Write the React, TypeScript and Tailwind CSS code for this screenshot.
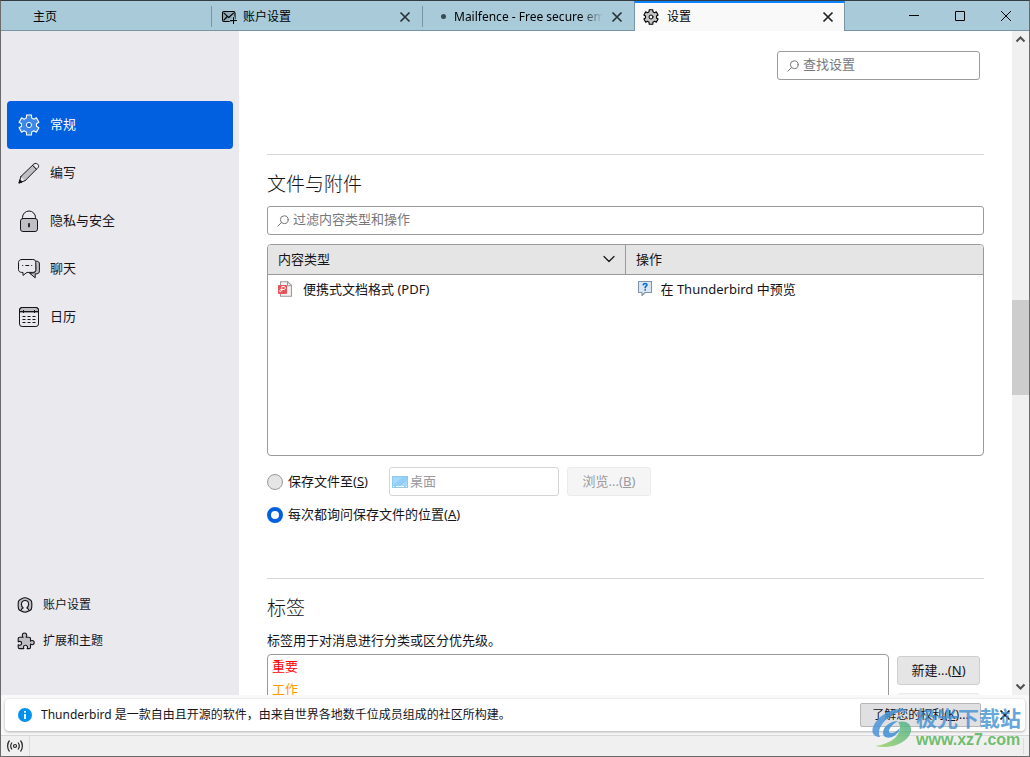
import type { ReactNode, SVGProps } from "react";

const FONT = "font-['Noto_Sans','Noto_Sans_CJK_SC',sans-serif]";

function gearPath(c: number, outer: number, inner: number) {
  const pts: string[] = [];
  for (let k = 0; k < 6; k++) {
    const mid = -90 + k * 60;
    const steps: [number, number][] = [
      [-20, inner],
      [-14, outer],
      [14, outer],
      [20, inner],
    ];
    for (const [da, r] of steps) {
      const a = ((mid + da) * Math.PI) / 180;
      pts.push(`${(c + r * Math.cos(a)).toFixed(2)} ${(c + r * Math.sin(a)).toFixed(2)}`);
    }
  }
  return `M${pts.join("L")}Z`;
}

function Icon({ size, children, ...rest }: { size: number; children: ReactNode } & SVGProps<SVGSVGElement>) {
  return (
    <svg
      width={size}
      height={size}
      viewBox={`0 0 ${size} ${size}`}
      fill="none"
      stroke="currentColor"
      strokeLinecap="round"
      strokeLinejoin="round"
      aria-hidden="true"
      className="shrink-0"
      {...rest}
    >
      {children}
    </svg>
  );
}

const GearLarge = () => (
  <Icon size={22} strokeWidth={1}>
    <path d={gearPath(11, 10.3, 7.6)} fill="currentColor" fillOpacity={0.25} strokeWidth={1.1} />
    <circle cx="11" cy="11" r="2.6" fill="#0060df" />
  </Icon>
);

const GearSmall = () => (
  <Icon size={16} strokeWidth={1}>
    <path d={gearPath(8, 7.4, 5.6)} fill="#c4c4c4" strokeWidth={1.1} />
    <circle cx="8" cy="8" r="2" fill="#f9f9fa" />
  </Icon>
);

const Pencil = () => (
  <Icon size={22} strokeWidth={1}>
    <path d="M3 14.4 14.8 3 18.7 7 7.2 18.6Z" fill="#c0bfc5" />
    <path d="M14.8 3c1.4-1.7 3.2-2.3 4.9-.8s1 3.4-1 4.8ZM3 14.4 1 20.8l6.2-2.2" fill="#eeeef2" />
    <path d="m1 20.8 1-3 2 2Z" fill="currentColor" />
  </Icon>
);

const Lock = () => (
  <Icon size={22} strokeWidth={1}>
    <path d="M4.500 8.500V7.500a6.500 6.500 0 0 1 13 0v1" />
    <rect x="2.500" y="8.500" width="17" height="13" rx="2.400" fill="#c0bfc5" />
    <path d="M11 13.800v2.600" strokeWidth={1.800} />
  </Icon>
);

const Chat = () => (
  <Icon size={22} strokeWidth={1}>
    <path d="M17.8 3.2h.8c1.8 0 2.8 1 2.8 2.8v6.8c0 1.8-.8 2.9-2.6 3h-1.6v4l-4.4-3.6-1.2-.8 4-.6c1.6-.2 2.2-1.2 2.2-2.6Z" fill="#c0bfc5" />
    <path d="M3.8 1.5h11c2 0 3 1.2 3 3v6.900c0 2-1 3-3 3H9l-4 3v-3H3.800c-2 0-3.300-1-3.300-3V4.500c0-1.800 1.300-3 3.300-3Z" fill="#eaeaee" />
    <path d="M4.600 7.500h.2M7.800 7.500h3M13.600 7.500h.2" />
  </Icon>
);

const CalendarIcon = () => (
  <Icon size={22} strokeWidth={1}>
    <path d="M1.500 5.500V4c0-1.600 1-2.500 2.600-2.500h13.800c1.600 0 2.600.9 2.600 2.500v1.500Z" fill="#c0bfc5" />
    <rect x="1.500" y="1.500" width="19" height="19" rx="2.600" />
    <path d="M1.500 5.500h19M5.500 4v3M16.500 4v3M4.500 10.500h3M9.500 10.500h3M14.500 10.500h3M4.500 13.500h3M9.500 13.500h3M14.500 13.500h3M4.500 16.500h3M9.500 16.500h3M14.500 16.500h3" strokeLinecap="butt" />
  </Icon>
);

const Account = () => (
  <Icon size={16} strokeWidth={1.1}>
    <path d="M8 .8c2 0 6 2 6.400 3.200.6 1.600.6 6.400 0 8C14 13.200 10 15.200 8 15.200S2 13.200 1.600 12C1 10.400 1 5.600 1.600 4 2 2.800 6 .8 8 .8Z" fill="#c0bfc5" />
    <path d="M4.200 13.200c.2-1.200.8-1.800 2-2.200C5 10 4.400 8.600 4.400 7.200c0-2.200 1.500-3.700 3.600-3.700s3.600 1.500 3.600 3.700c0 1.400-.6 2.800-1.800 3.800 1.200.4 1.800 1 2 2.200" fill="#eaeaee" />
  </Icon>
);

const Puzzle = () => (
  <Icon size={18} strokeWidth={1.1}>
    <path d="M6.200 5.200h-.3c-.3-.6-.6-1.200-.6-1.800 0-1.400.9-2.400 2.200-2.400s2.200 1 2.200 2.400c0 .6-.2 1.200-.6 1.800h3c.9 0 1.400.5 1.400 1.400v2.600c.6-.5 1.100-.7 1.700-.7 1.200 0 2 .9 2 2.100s-.8 2.100-2 2.100c-.6 0-1.100-.2-1.700-.7v3.200c0 .9-.5 1.400-1.400 1.400h-2c.3-.5.4-.9.400-1.400 0-1.200-.8-2-2-2s-2 .8-2 2c0 .5.100.9.400 1.400H2.600c-.9 0-1.400-.5-1.400-1.400v-2.400c.5.300.9.400 1.400.4 1.200 0 2-.8 2-1.900s-.8-1.900-2-1.900c-.5 0-.9.100-1.400.4V6.600c0-.9.500-1.400 1.400-1.400Z" fill="#c0bfc5" />
  </Icon>
);

const MailGear = () => (
  <Icon size={16} strokeWidth={1.1}>
    <rect x="1.500" y="2.500" width="12.500" height="10" rx="1.500" fill="#8eacb8" />
    <path d="m3 4.200 4.700 4.300 4.800-4.300M3 11l2.800-3" />
    <path d="M12.500 8.500v6M9.500 11.500h6" stroke="#a8cad9" strokeWidth={2.600} />
    <path d="M12.500 8.500v6M9.500 11.500h6" />
  </Icon>
);

const Close = () => (
  <svg width="12" height="12" viewBox="0 0 12 12" stroke="currentColor" strokeWidth="1.700" aria-hidden="true">
    <path d="m1.500 1.500 9 9M10.500 1.500l-9 9" />
  </svg>
);

const Search = () => (
  <Icon size={12} strokeWidth={1}>
    <circle cx="7.300" cy="4.700" r="3.900" />
    <path d="M4.500 7.500.8 11.200" />
  </Icon>
);

const PdfIcon = () => (
  <Icon size={16} strokeWidth={1.100}>
    <path d="M3.500.8h7.300l3.700 3.600v10.800h-11Z" stroke="#9a9a9f" fill="#f3f3f4" />
    <path d="M10.500 1v3.700h3.800" stroke="#9a9a9f" />
    <rect x="1" y="4" width="9" height="9" rx="1" fill="#ee5058" stroke="none" />
    <path d="M4.700 9.200V5.600h2.600c1.400.3 1.400 2.600 0 2.900H4c-1.300.3-1.600 1.400-1.200 2 .6.600 1.700 0 1.900-1.300" stroke="#fff" strokeWidth={1} />
  </Icon>
);

const PreviewIcon = () => (
  <Icon size={16} strokeWidth={1.100}>
    <path d="M1.500.5h13v11H8.200L5 14.500v-3H1.500Z" fill="#dbe7f4" stroke="#8492aa" />
    <path d="M6.300 3.600c.2-1.400 3.700-1.600 3.600.3-.1 1.200-1.700 1.300-1.700 2.700M8.200 8.900v.1" stroke="#0b6ed0" strokeWidth={1.700} />
  </Icon>
);

const DesktopIcon = () => (
  <svg width="16" height="12" viewBox="0 0 16 12" aria-hidden="true">
    <rect width="16" height="12" fill="#8fc9f2" />
    <path d="M1 1h14v9H1Z" fill="#a4d8fb" />
    <path d="M1 10 10 1h5v3L8 10Z" fill="#91cef8" />
    <path d="M1 10.500h1M4 10.500h8M14 10.500h1" stroke="#fff" />
  </svg>
);

const InfoIcon = () => (
  <svg width="14" height="14" viewBox="0 0 14 14" className="shrink-0" aria-hidden="true">
    <circle cx="7" cy="7" r="7" fill="#0090ed" />
    <path d="M7 6v5M7 3v1.800" stroke="#fff" strokeWidth="1.800" />
  </svg>
);

function Tab({ icon, label, active, closable = true, faded }: { icon?: ReactNode; label: string; active?: boolean; closable?: boolean; faded?: boolean }) {
  return (
    <div
      className={
        active
          ? "flex min-w-0 items-center border-x border-t-2 border-x-[#7895a3] border-t-[#0a84ff] bg-[#f9f9fa] px-2"
          : "flex min-w-0 items-center border-b border-[#7895a3] pt-[2px]"
      }
    >
      <button type="button" className={active ? "flex min-w-0 flex-1 items-center gap-2" : "flex min-w-0 flex-1 items-center gap-1.5 pl-[9px]"}>
        {icon}
        <span className={faded ? "min-w-0 overflow-hidden whitespace-nowrap [mask-image:linear-gradient(to_right,black_85%,transparent)]" : "whitespace-nowrap"}>
          {label}
        </span>
      </button>
      {closable && (
        <button type="button" aria-label={`关闭 ${label}`} className={active ? "mr-[2px] text-[#222]" : faded ? "mr-[11px] ml-2 text-[#2a3338]" : "mr-[11px] text-[#2a3338]"}>
          <Close />
        </button>
      )}
      {!active && !faded && <span className="h-[21px] w-px bg-[#7895a3]" />}
    </div>
  );
}

const NAV = [
  { label: "常规", icon: <GearLarge />, active: true },
  { label: "编写", icon: <Pencil /> },
  { label: "隐私与安全", icon: <Lock /> },
  { label: "聊天", icon: <Chat /> },
  { label: "日历", icon: <CalendarIcon /> },
];

function Sidebar() {
  return (
    <aside className="flex w-[238px] shrink-0 flex-col bg-[#eaeaee] px-1.5 pt-[70px] pb-9">
      <nav className="flex flex-col">
        {NAV.map((n) => (
          <a
            key={n.label}
            href="#"
            className={
              n.active
                ? "flex h-12 items-center gap-2.5 rounded bg-[#0060df] px-[11px] text-white"
                : "flex h-12 items-center gap-2.5 rounded px-[11px]"
            }
          >
            {n.icon}
            {n.label}
          </a>
        ))}
      </nav>
      <div className="mt-auto flex flex-col text-xs">
        <a href="#" className="flex h-9 items-center gap-2.5 px-[10px]">
          <Account />
          账户设置
        </a>
        <a href="#" className="flex h-9 items-center gap-2 px-[10px]">
          <Puzzle />
          扩展和主题
        </a>
      </div>
    </aside>
  );
}

function SearchBox({ id, label, className }: { id: string; label: string; className: string }) {
  return (
    <div className={`flex h-[29px] items-center gap-1 rounded-[3px] border border-[#9a9a9c] bg-white pl-[9px] text-[#77777c] ${className}`}>
      <Search />
      <input id={id} type="text" aria-label={label} placeholder={label} className="min-w-0 flex-1 bg-transparent pb-px outline-none placeholder:text-[#77777c]" />
    </div>
  );
}

function Content() {
  return (
    <main className="min-w-0 flex-1 overflow-hidden bg-white pl-7 pr-7">
      <div className="flex justify-end pt-5 pr-1">
        <SearchBox id="find" label="查找设置" className="w-[203px]" />
      </div>

      <section className="mt-[74px] border-t border-[#d7d7db] pt-[15px]">
        <h2 className="text-[19px] leading-7 font-light">文件与附件</h2>
        <SearchBox id="filter" label="过滤内容类型和操作" className="mt-2" />

        <div className="mt-[9px] h-[212px] overflow-hidden rounded border border-[#9a9a9c]">
          <table className="w-full table-fixed border-collapse text-left">
            <thead>
              <tr className="h-[29px] border-b border-[#9a9a9c] bg-[#e5e5e5]">
                <th className="border-r border-[#9a9a9c] px-2.5 font-normal">
                  <div className="flex items-center justify-between">
                    内容类型
                    <Icon size={12} strokeWidth={1.200}>
                      <path d="m1 3.500 5 5 5-5" />
                    </Icon>
                  </div>
                </th>
                <th className="px-2.5 font-normal">操作</th>
              </tr>
            </thead>
            <tbody>
              <tr className="h-[30px]">
                <td className="px-[9px]">
                  <div className="flex items-center gap-2.5">
                    <PdfIcon />
                    便携式文档格式 (PDF)
                  </div>
                </td>
                <td className="px-[11px]">
                  <div className="flex items-center gap-2">
                    <PreviewIcon />
                    在 Thunderbird 中预览
                  </div>
                </td>
              </tr>
            </tbody>
          </table>
        </div>

        <div className="mt-[11px] flex h-[29px] items-center">
          <input
            id="saveTo"
            type="radio"
            name="save"
            className="size-4 appearance-none rounded-full border border-[#9a9a9c] bg-[#e5e5e5] checked:border-4 checked:border-[#0060df] checked:bg-white"
          />
          <label htmlFor="saveTo" className="ml-[5px]">
            保存文件至(<u>S</u>)
          </label>
          <div className="ml-[21px] flex h-[29px] w-[170px] items-center gap-[2px] rounded-[3px] border border-[#d5d5d7] pl-[2px] text-[#9a9a9e]">
            <DesktopIcon />
            <input type="text" disabled defaultValue="桌面" aria-label="保存位置" className="min-w-0 flex-1 bg-transparent" />
          </div>
          <button type="button" disabled className="ml-2 h-[29px] w-[84px] rounded-[3px] border border-[#ebebeb] bg-[#f5f5f5] text-[#9a9a9e]">
            浏览...(<u>B</u>)
          </button>
        </div>
        <div className="mt-1 flex h-[29px] items-center">
          <input
            id="ask"
            type="radio"
            name="save"
            defaultChecked
            className="size-4 appearance-none rounded-full border border-[#9a9a9c] bg-[#e5e5e5] checked:border-4 checked:border-[#0060df] checked:bg-white"
          />
          <label htmlFor="ask" className="ml-[5px]">
            每次都询问保存文件的位置(<u>A</u>)
          </label>
        </div>
      </section>

      <section className="mt-[49px] border-t border-[#d7d7db] pt-[15px]">
        <h2 className="text-[19px] leading-7 font-light">标签</h2>
        <p className="mt-2 leading-5">标签用于对消息进行分类或区分优先级。</p>
        <div className="mt-1 flex gap-2 pr-1">
          <ul className="h-[140px] flex-1 rounded border border-[#9a9a9c] px-1 leading-[23px]">
            <li className="text-[#ff0000]">重要</li>
            <li className="text-[#ff9900]">工作</li>
          </ul>
          <div className="flex w-[83px] flex-col gap-2 pt-[2px]">
            <button type="button" className="h-[29px] rounded-[3px] border border-[#cfcfd2] bg-[#e5e5e5]">
              新建...(<u>N</u>)
            </button>
            <button type="button" disabled aria-label="编辑" className="h-[29px] rounded-[3px] border border-[#ebebeb] bg-[#f5f5f5]" />
          </div>
        </div>
      </section>
    </main>
  );
}

function Scrollbar() {
  return (
    <div className="flex w-[17px] shrink-0 flex-col bg-[#f0f0f0] text-[#505050]" aria-hidden="true">
      <svg width="17" height="17" viewBox="0 0 17 17" fill="none" stroke="currentColor" strokeWidth="2">
        <path d="m4.500 10.500 4-4 4 4" />
      </svg>
      <div className="grow-[252]" />
      <div className="h-[95px] bg-[#cdcdcd]" />
      <div className="grow-[283]" />
      <svg width="17" height="17" viewBox="0 0 17 17" fill="none" stroke="currentColor" strokeWidth="2">
        <path d="m4.500 6.500 4 4 4-4" />
      </svg>
    </div>
  );
}

function Watermark() {
  return (
    <div className="pointer-events-none absolute right-2 bottom-1.5 flex items-center gap-[2px]">
      <svg width="42" height="42" viewBox="0 0 42 42" aria-hidden="true">
        <defs>
          <linearGradient id="sweep" x1="0" y1="1" x2="1" y2="0">
            <stop offset="0" stopColor="#9fd36a" />
            <stop offset="1" stopColor="#4bb08c" />
          </linearGradient>
        </defs>
        <path d="M36 3C22-1 6 8 1 20c-2 6 1 10 7 10-2-4-1-9 3-14C17 8 27 4 36 3Z" fill="#4a94d8" fillOpacity=".85" />
        <path d="M26 14c-8 0-15 6-15 12 0 5 6 6 11 3 3-2 5-4 6-8-3 3-6 5-9 5-4 0-2-7 7-12Z" fill="#3e8fd4" fillOpacity=".85" />
        <path d="M3 39c8-1 16-4 21-9 5-6 5-11 2-15 8-2 14 2 13 9-2 10-17 19-36 15Z" fill="url(#sweep)" fillOpacity=".85" />
      </svg>
      <div className="flex flex-col">
        <span className="text-[21px] leading-6 font-bold whitespace-nowrap text-[#3f8fd2]/80">极光下载站</span>
        <span className="font-['Liberation_Sans',sans-serif] text-[16px] leading-5 font-bold text-[#56b558]/85">www.xz7.com</span>
      </div>
    </div>
  );
}

export default function App() {
  return (
    <div className={`relative flex h-screen flex-col overflow-hidden border border-t-[#353c42] border-r-[#6b6b6b] border-b-[#6b6b6b] border-l-[#6b6b6b] bg-white text-[13px] text-[#15141a] ${FONT}`}>
      <header className="flex h-[30px] shrink-0 bg-[#a8cad9] text-xs text-black">
        <div className="grid min-w-0 flex-1 grid-cols-4">
          <Tab label="主页" closable={false} icon={<span className="w-[17px]" />} />
          <Tab label="账户设置" icon={<MailGear />} />
          <Tab label="Mailfence - Free secure email" faded icon={<span className="mr-[2px] ml-[9px] size-[5px] shrink-0 rounded-full bg-[#3b4a52]" />} />
          <Tab label="设置" active icon={<GearSmall />} />
        </div>
        <div className="flex shrink-0 border-b border-[#7895a3] pl-[46px]">
          <button type="button" aria-label="最小化" className="flex w-[46px] items-center justify-center">
            <svg width="10" height="10" viewBox="0 0 10 10" stroke="#000"><path d="M0 4.500h10" /></svg>
          </button>
          <button type="button" aria-label="最大化" className="flex w-[46px] items-center justify-center">
            <svg width="10" height="10" viewBox="0 0 10 10" stroke="#000" fill="none"><path d="M.5.5h9v9h-9Z" /></svg>
          </button>
          <button type="button" aria-label="关闭" className="flex w-[46px] items-center justify-center">
            <svg width="10" height="10" viewBox="0 0 10 10" stroke="#000"><path d="m0 0 10 10M10 0 0 10" /></svg>
          </button>
        </div>
      </header>

      <div className="flex min-h-0 flex-1">
        <Sidebar />
        <Content />
        <Scrollbar />
      </div>

      <div className="shrink-0 bg-[#f9f9fa] px-1 pt-1 pb-1 text-xs">
        <div className="flex h-8 items-center rounded bg-white pr-[14px] pl-[13px] shadow-[0_1px_3px_rgba(0,0,0,0.3)]" role="status">
          <InfoIcon />
          <span className="ml-[9px] flex-1">Thunderbird 是一款自由且开源的软件，由来自世界各地数千位成员组成的社区所构建。</span>
          <button type="button" className="mr-[18px] h-6 w-[121px] rounded-[2px] border border-[#b8b8bb] bg-[#e0e0e3]">
            了解您的权利(<u>K</u>)...
          </button>
          <button type="button" aria-label="关闭通知">
            <Close />
          </button>
        </div>
      </div>

      <footer className="flex h-[21px] shrink-0 items-stretch justify-between border-t border-[#d7d7db] bg-[#f0f0f0]">
        <button type="button" aria-label="联机" className="flex w-[29px] items-center justify-center border-r border-[#dcdcdc]">
          <svg width="18" height="14" viewBox="0 0 18 14" fill="none" stroke="#222" strokeWidth="1.200" aria-hidden="true">
            <circle cx="9" cy="7" r="1.500" />
            <path d="M6 3.500c-1.500 2-1.500 5 0 7M12 3.500c1.500 2 1.500 5 0 7M3.500 1.500c-2.500 3-2.500 8 0 11M14.500 1.500c2.500 3 2.500 8 0 11" />
          </svg>
        </button>
        <span className="my-[2px] mr-[5px] w-px bg-[#dcdcdc]" />
      </footer>
      <span className="absolute -bottom-px left-[343px] h-px w-9 bg-[#1f4e79]" />
      <Watermark />
    </div>
  );
}
